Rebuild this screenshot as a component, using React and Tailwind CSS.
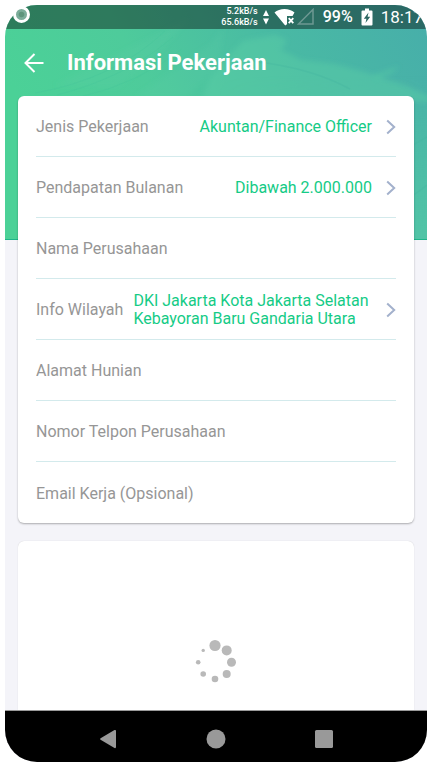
import React from "react";

const selectValue = "text-base leading-[18px] text-[#15cb86]";

function Chevron() {
  return (
    <svg width="10" height="16" viewBox="0 0 10 16" fill="none" className="shrink-0" aria-hidden="true">
      <path d="M1.2 1.500 8.200 8l-7 6.500" stroke="#a3b1cc" strokeWidth="2" />
    </svg>
  );
}

function SelectRow({ label, value, wide }) {
  return (
    <button type="button" className="flex h-[61px] w-full items-center border-b border-[#d3eaec] pt-px text-left">
      <span className="shrink-0 text-base text-[#969696]">{label}</span>
      <span className={wide ? `ml-2.5 flex-1 pr-2 ${selectValue}` : `flex-1 pr-3.5 text-right ${selectValue}`}>
        {value}
      </span>
      <Chevron />
    </button>
  );
}

function InputRow({ label, type, last }) {
  return (
    <input
      type={type}
      aria-label={label}
      placeholder={label}
      className={
        "block h-[61px] w-full bg-transparent pt-px text-base text-[#15cb86] outline-none placeholder:text-[#969696] " +
        (last ? "" : "border-b border-[#d3eaec]")
      }
    />
  );
}

function HeroArt() {
  return (
    <svg
      className="absolute inset-x-0 top-0 h-[235px] w-full"
      viewBox="0 0 422 235"
      preserveAspectRatio="none"
      aria-hidden="true"
    >
      <defs>
        <linearGradient id="hero" x1="0" y1="0.3" x2="1" y2="0">
          <stop offset="0" stopColor="#4bd197" />
          <stop offset="0.3" stopColor="#4ecb9b" />
          <stop offset="0.65" stopColor="#49b9a4" />
          <stop offset="1" stopColor="#47aeaa" />
        </linearGradient>
        <linearGradient id="lower" x1="0" y1="0" x2="0" y2="1">
          <stop offset="0.3" stopColor="#52c4a6" stopOpacity="0" />
          <stop offset="1" stopColor="#52c4a6" />
        </linearGradient>
        <linearGradient id="lowerFade" x1="0" y1="0" x2="1" y2="0">
          <stop offset="0" stopColor="#000" />
          <stop offset="1" stopColor="#fff" />
        </linearGradient>
        <mask id="rightSide">
          <rect x="211" width="211" height="235" fill="url(#lowerFade)" />
        </mask>
        <filter id="soft" x="-10%" y="-30%" width="120%" height="160%">
          <feGaussianBlur stdDeviation="2.500" />
        </filter>
      </defs>
      <rect width="422" height="235" fill="url(#hero)" />
      <rect x="211" width="211" height="235" fill="url(#lower)" mask="url(#rightSide)" />
      <g filter="url(#soft)" fill="#5bcfa6">
        <path opacity=".45" d="M205 72 238 36l32-6 12 5-6 10 20 10 34 4 30 8 42 14 30 14-14 2-36-4 20 10-210 6z" />
        <path opacity=".4" d="M368 70l26-9-8 8-14 5z" />
        <path opacity=".22" d="M50 80 140 36l45-23-40 44-34 26z" />
        <path opacity=".18" d="M130 92 205 40l14-18-6 40-32 30z" />
      </g>
      <g fill="none" stroke="#46c69a" strokeWidth="1" opacity=".4">
        <path d="M30 88q80-14 130-62M52 90q70-18 116-58M75 92q60-14 102-48" />
      </g>
      <g fill="none" stroke="#43b29f" strokeWidth="1.500" opacity=".3">
        <path d="M245 56q60 6 100 28M408 140l14-8M409 190l13-10" />
      </g>
      <rect y="234" width="422" height="1" fill="#1fb58a" />
    </svg>
  );
}

function StatusBar() {
  return (
    <div className="relative flex h-6 items-center justify-end bg-black/40 text-white">
      <div className="text-right text-[9px] leading-[11px] font-medium whitespace-nowrap">
        <div>5.2kB/s</div>
        <div>65.6kB/s</div>
      </div>
      <svg width="8" height="16" viewBox="0 0 8 16" fill="#fff" className="ml-1" aria-hidden="true">
        <path d="M1 7 4 1l3 6zM1 9.500h6L4 15.500z" />
      </svg>
      <svg width="22" height="18" viewBox="0 0 22 18" className="ml-1" aria-hidden="true">
        <path d="M.5 4.500C5.500-.2 15.500-.2 20.500 4.500L18.500 8H13v8.200l-1.800 1.200z" fill="#fff" />
        <path d="m14.700 10.200 4.600 5m0-5-4.600 5" stroke="#fff" strokeWidth="1.800" />
      </svg>
      <svg width="18" height="18" viewBox="0 0 18 18" className="ml-px" aria-hidden="true">
        <path d="M16 1.500V16H1.500z" fill="none" stroke="#6d9892" strokeWidth="1.500" />
      </svg>
      <span className="ml-2 text-base leading-6 font-medium">99%</span>
      <svg width="12" height="18" viewBox="0 0 12 18" className="ml-2" aria-hidden="true">
        <path d="M4 .5h4v2h2.500q1 0 1 1v13q0 1-1 1h-9q-1 0-1-1v-13q0-1 1-1H4z" fill="#fff" />
        <path d="M7.500 4.500 2.800 10.700h2.600l-.9 4.300 4.700-6.200H6.600z" fill="#2c6762" />
      </svg>
      <span className="mr-1 ml-2 text-[17px] leading-6">18:17</span>
    </div>
  );
}

export default function App() {
  return (
    <div className="relative flex h-screen min-h-[600px] flex-col bg-white px-[5px] pt-[5px] pb-[6px] font-['Roboto','Liberation_Sans',sans-serif]">
      <div className="relative flex flex-1 flex-col overflow-hidden rounded-[32px] bg-[#f4f4f9]">
        <HeroArt />
        <StatusBar />
        <header className="relative flex h-[67px] items-center pl-[18px]">
          <button type="button" aria-label="Kembali" className="shrink-0">
            <svg width="22" height="22" viewBox="0 0 22 22" fill="none" stroke="#fff" strokeWidth="2" aria-hidden="true">
              <path d="M20.500 11H3M11.500 2 2.500 11l9 9" />
            </svg>
          </button>
          <h1 className="ml-[22px] pt-px text-[22px] leading-7 font-bold text-white">Informasi Pekerjaan</h1>
        </header>

        <main className="relative flex min-h-0 flex-1 flex-col gap-[18px] overflow-hidden px-[13px]">
          <form className="shrink-0 rounded-md bg-white px-[18px] shadow-[0_1px_2px_rgba(0,0,0,0.3)]">
            <SelectRow label="Jenis Pekerjaan" value="Akuntan/Finance Officer" />
            <SelectRow label="Pendapatan Bulanan" value="Dibawah 2.000.000" />
            <InputRow type="text" label="Nama Perusahaan" />
            <SelectRow label="Info Wilayah" value="DKI Jakarta Kota Jakarta Selatan Kebayoran Baru Gandaria Utara" wide />
            <InputRow type="text" label="Alamat Hunian" />
            <InputRow type="tel" label="Nomor Telpon Perusahaan" />
            <InputRow type="email" label="Email Kerja (Opsional)" last />
          </form>
          <section className="flex flex-1 justify-center rounded-t-md bg-white pt-[98px] shadow-[0_0_1px_rgba(0,0,0,0.2)]">
            <svg width="44" height="46" viewBox="-2 -3 44 46" fill="#b9b9b9" role="img" aria-label="Memuat">
              <circle cx="19" cy="3.500" r="5.600" />
              <circle cx="30.700" cy="8.400" r="5" />
              <circle cx="35.500" cy="20.300" r="4.500" />
              <circle cx="30.700" cy="32" r="4" />
              <circle cx="19" cy="37" r="3.300" />
              <circle cx="7.200" cy="32" r="2.800" />
              <circle cx="2.200" cy="20.300" r="2.300" />
              <circle cx="7.200" cy="8.400" r="1.700" />
            </svg>
          </section>
        </main>

        <nav className="relative flex h-[52px] shrink-0 items-center justify-center border-t border-[#9a9a9a] bg-black pt-1">
          <button type="button" aria-label="Kembali ke layar sebelumnya" className="flex w-[108px] justify-center">
            <svg width="20" height="20" viewBox="0 0 20 20" fill="#999" aria-hidden="true">
              <path d="M2.600 9.200 16.500 1q1.500-.5 1.500 1v16q0 1.500-1.500 1L2.600 10.800q-1.200-.8 0-1.600z" />
            </svg>
          </button>
          <button type="button" aria-label="Beranda" className="flex w-[108px] justify-center">
            <svg width="20" height="20" viewBox="0 0 20 20" fill="#999" aria-hidden="true">
              <circle cx="10" cy="10" r="9.500" />
            </svg>
          </button>
          <button type="button" aria-label="Aplikasi terbaru" className="flex w-[108px] justify-center">
            <svg width="20" height="20" viewBox="0 0 20 20" fill="#999" aria-hidden="true">
              <rect x="1" y="1" width="18" height="18" rx="1.500" />
            </svg>
          </button>
        </nav>
      </div>

      <svg className="absolute top-1.5 left-[13px]" width="18" height="18" viewBox="0 0 18 18" aria-hidden="true">
        <circle cx="8.500" cy="8.500" r="7" fill="#7cad9a" stroke="#fff" strokeWidth="3" />
        <circle cx="8.500" cy="8.500" r="2.800" fill="#5e957c" />
      </svg>
    </div>
  );
}
